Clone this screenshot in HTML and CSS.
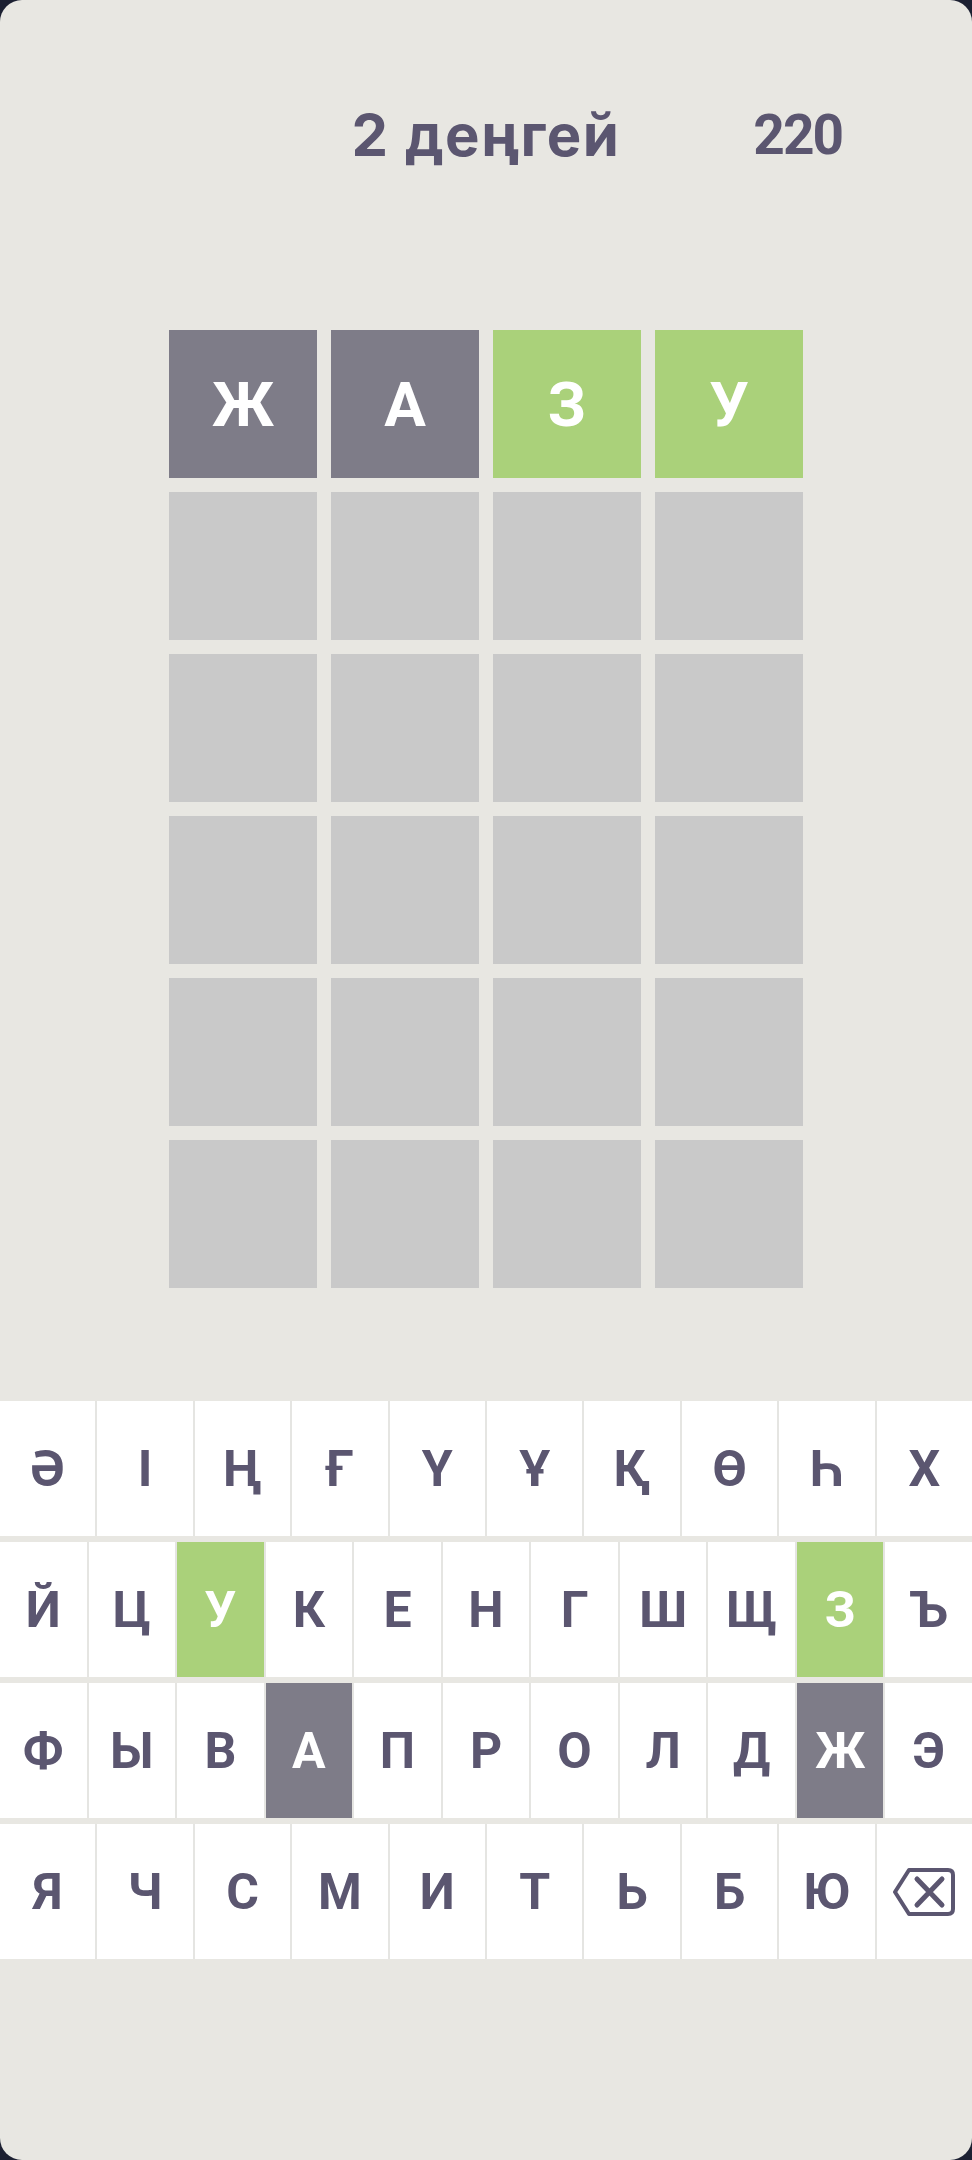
FILE: index.html
```html
<!DOCTYPE html>
<html lang="kk">
<head>
<meta charset="utf-8">
<title>Сөз ойыны</title>
<link rel="stylesheet" href="styles.css">
</head>
<body>
<div class="screen">
  <header class="header">
    <div class="side"></div>
    <div class="level">2 деңгей</div>
    <div class="side score-wrap"><span class="score">220</span></div>
  </header>

  <main class="board">
    <div class="tile absent">Ж</div>
    <div class="tile absent">А</div>
    <div class="tile correct">З</div>
    <div class="tile correct">У</div>
    <div class="tile"></div><div class="tile"></div><div class="tile"></div><div class="tile"></div>
    <div class="tile"></div><div class="tile"></div><div class="tile"></div><div class="tile"></div>
    <div class="tile"></div><div class="tile"></div><div class="tile"></div><div class="tile"></div>
    <div class="tile"></div><div class="tile"></div><div class="tile"></div><div class="tile"></div>
    <div class="tile"></div><div class="tile"></div><div class="tile"></div><div class="tile"></div>
  </main>

  <section class="keyboard">
    <div class="krow">
      <div class="key">Ә</div><div class="key">І</div><div class="key">Ң</div><div class="key">Ғ</div><div class="key">Ү</div>
      <div class="key">Ұ</div><div class="key">Қ</div><div class="key">Ө</div><div class="key">Һ</div><div class="key">Х</div>
    </div>
    <div class="krow">
      <div class="key">Й</div><div class="key">Ц</div><div class="key correct">У</div><div class="key">К</div><div class="key">Е</div>
      <div class="key">Н</div><div class="key">Г</div><div class="key">Ш</div><div class="key">Щ</div><div class="key correct">З</div><div class="key">Ъ</div>
    </div>
    <div class="krow">
      <div class="key">Ф</div><div class="key">Ы</div><div class="key">В</div><div class="key absent">А</div><div class="key">П</div>
      <div class="key">Р</div><div class="key">О</div><div class="key">Л</div><div class="key">Д</div><div class="key absent">Ж</div><div class="key">Э</div>
    </div>
    <div class="krow">
      <div class="key">Я</div><div class="key">Ч</div><div class="key">С</div><div class="key">М</div><div class="key">И</div>
      <div class="key">Т</div><div class="key">Ь</div><div class="key">Б</div><div class="key">Ю</div>
      <div class="key backspace">
        <svg class="bs-icon" viewBox="0 0 62 48" width="62" height="48" aria-label="Өшіру">
          <path d="M16 2 H55 Q60 2 60 7 V41 Q60 46 55 46 H16 L2 24 Z" fill="none" stroke="#5b5670" stroke-width="4" stroke-linejoin="round"/>
          <path d="M24 11 L49 37 M49 11 L24 37" fill="none" stroke="#5b5670" stroke-width="5" stroke-linecap="round"/>
        </svg>
      </div>
    </div>
  </section>
</div>
</body>
</html>
```

FILE: styles.css
```css
html, body {
  margin: 0;
  padding: 0;
  background: #1c2032;
}

.screen {
  width: 972px;
  height: 2160px;
  background: #e8e7e2;
  border-radius: 22px;
  overflow: hidden;
  display: flex;
  flex-direction: column;
  font-family: "Roboto", "Noto Sans", sans-serif;
  color: #5b5670;
}

.header {
  display: grid;
  grid-template-columns: 1fr auto 1fr;
  align-items: center;
  height: 80px;
  margin-top: 95px;
}

.level {
  font-family: "Inter", "Noto Sans", sans-serif;
  font-weight: 700;
  font-size: 58px;
  line-height: 80px;
  letter-spacing: 1.5px;
}

.score-wrap {
  display: flex;
  justify-content: flex-end;
  padding-right: 130px;
}

.score {
  font-family: "Roboto", "Noto Sans", sans-serif;
  font-weight: 700;
  font-size: 55px;
  line-height: 80px;
  letter-spacing: -2px;
}

.board {
  display: grid;
  grid-template-columns: repeat(4, 148px);
  grid-auto-rows: 148px;
  gap: 14px;
  justify-content: center;
  margin-top: 155px;
}

.tile {
  background: #c9c9c9;
  display: flex;
  align-items: center;
  justify-content: center;
  color: #ffffff;
  font-weight: 700;
  font-size: 62px;
}

.tile.absent { background: #7e7c88; }
.tile.correct { background: #aad17a; }

.keyboard {
  margin-top: 113px;
  display: flex;
  flex-direction: column;
  gap: 6px;
}

.krow {
  display: flex;
  height: 135px;
  gap: 2px;
  background: #e5e5e2;
}

.key {
  flex: 1;
  background: #ffffff;
  display: flex;
  align-items: center;
  justify-content: center;
  font-weight: 700;
  font-size: 50px;
  color: #5b5670;
}

.key.correct { background: #aad17a; color: #ffffff; }
.key.absent { background: #7e7c88; color: #ffffff; }

.bs-icon { display: block; }
```
